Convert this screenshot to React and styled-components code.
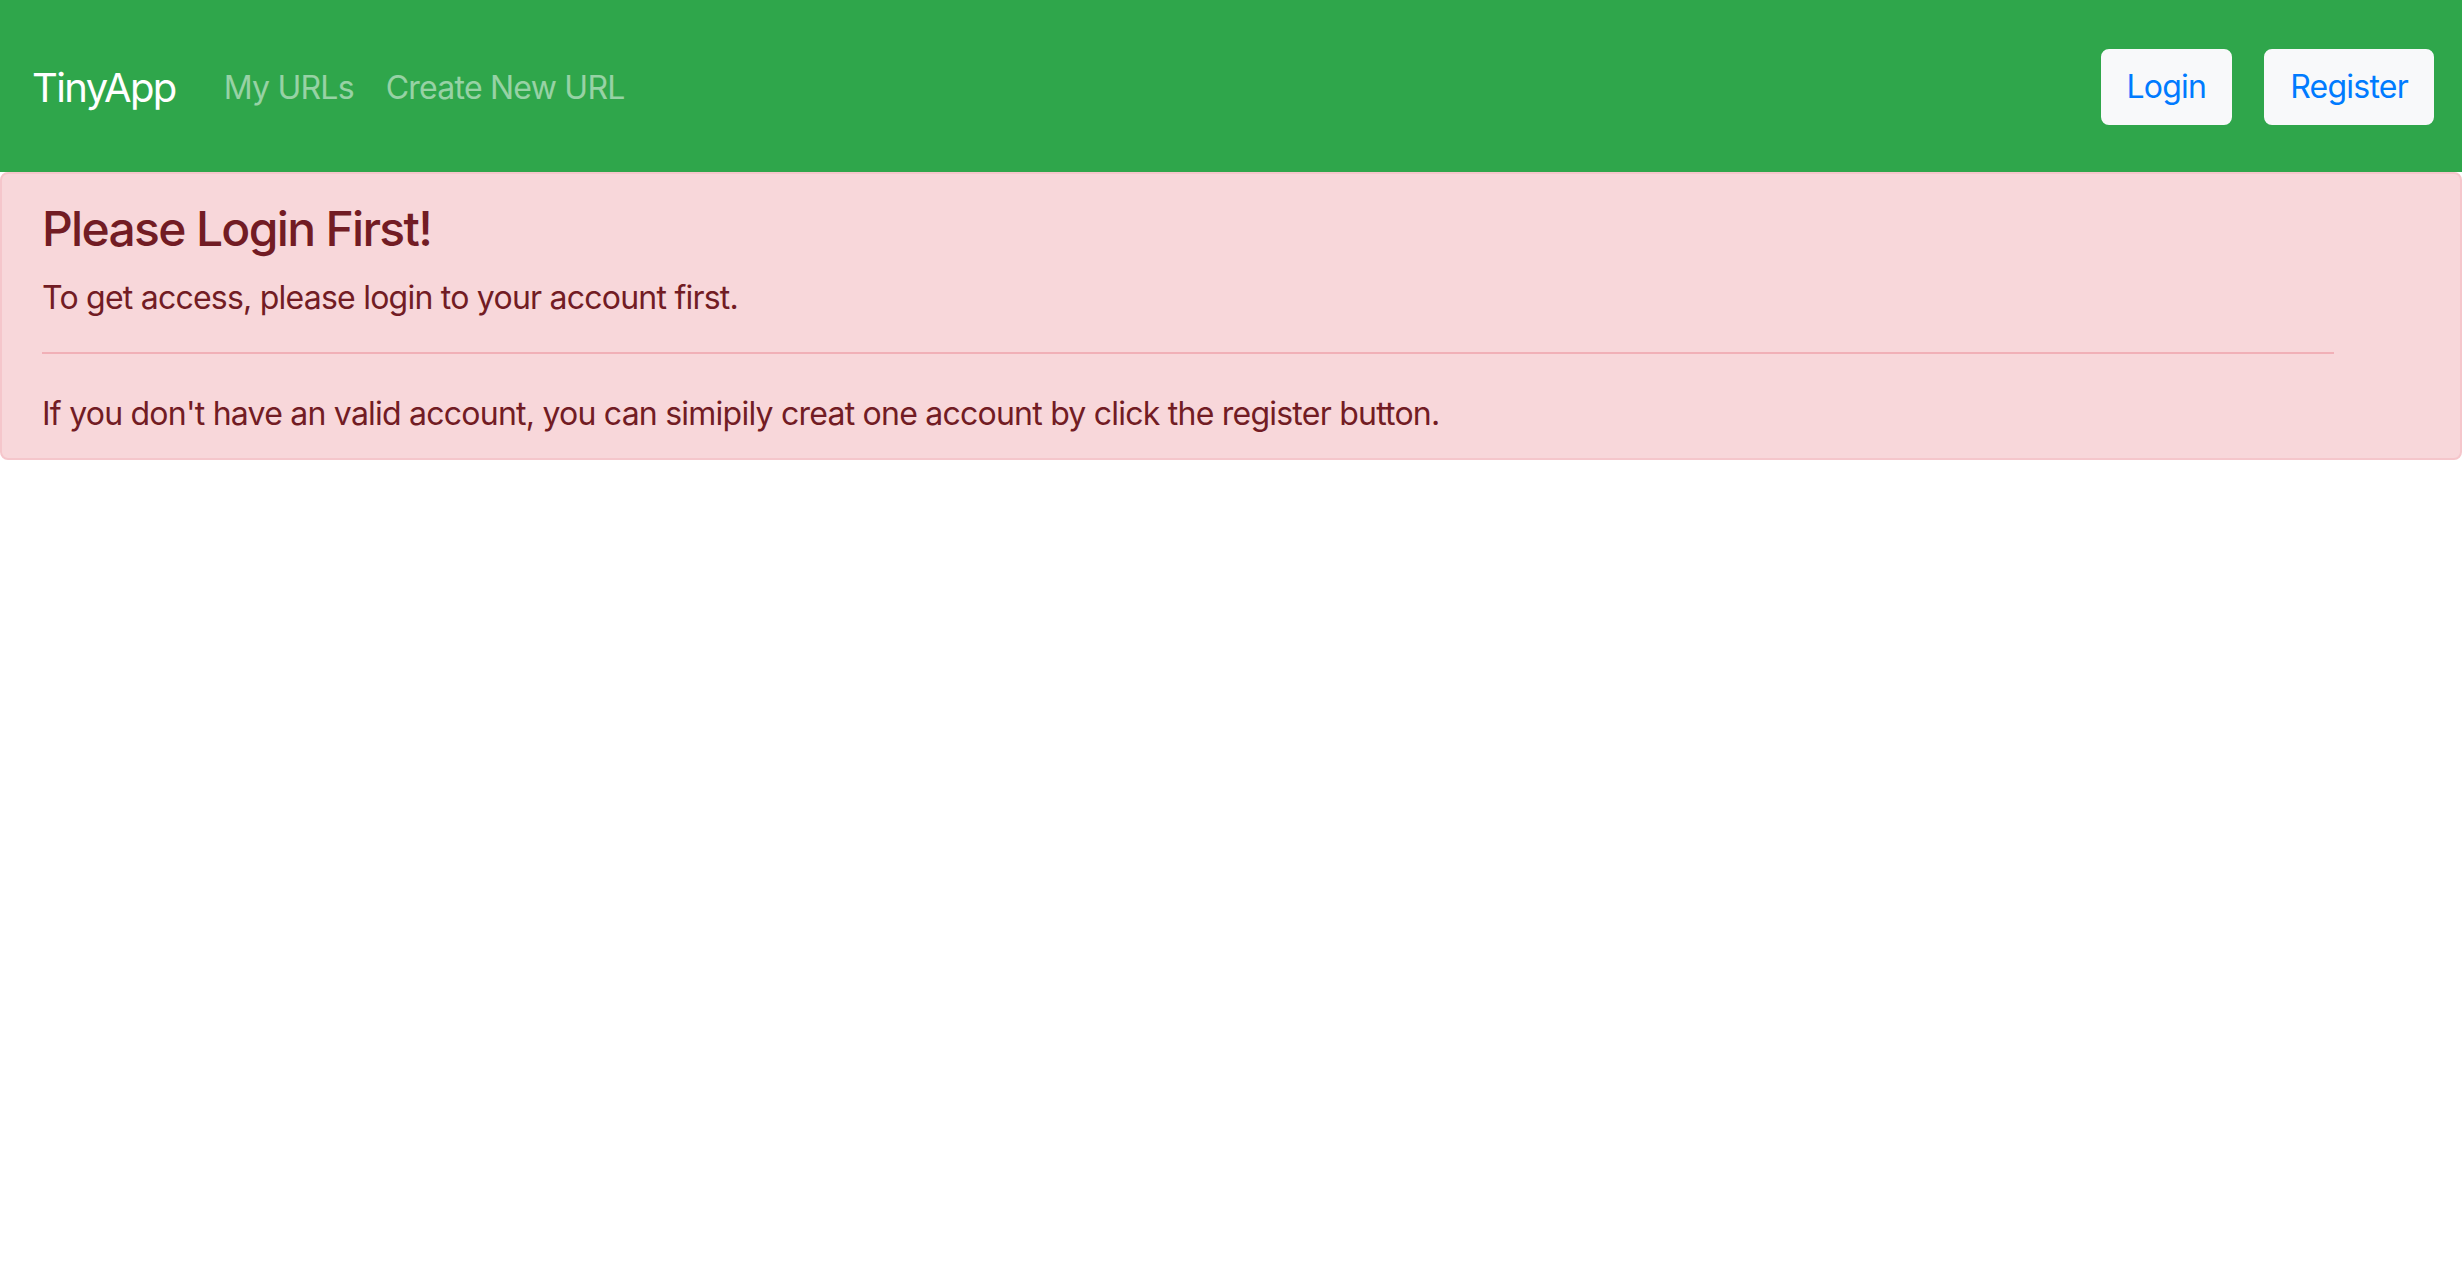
import React from 'react';
import styled, { createGlobalStyle } from 'styled-components';

const GlobalStyle = createGlobalStyle`
  html, body {
    margin: 0;
    padding: 0;
    background: #fff;
  }
  body {
    font-family: Inter, "Noto Sans", "Liberation Sans", sans-serif;
    font-size: 32px;
    line-height: 1.5;
    letter-spacing: -0.024em;
    color: #212529;
  }
`;

const Navbar = styled.nav`
  display: flex;
  align-items: center;
  height: 172px;
  box-sizing: border-box;
  padding: 18px 28px 14px 32px;
  background-color: #2fa64b;
`;

const Brand = styled.a`
  margin-right: 32px;
  font-size: 40px;
  line-height: 1.5;
  letter-spacing: -0.04em;
  color: #fff;
  text-decoration: none;
`;

const NavList = styled.ul`
  display: flex;
  flex: 1;
  margin: 0;
  padding: 0;
  list-style: none;
`;

const NavLink = styled.a`
  display: block;
  padding: 0 16px;
  color: rgba(255, 255, 255, 0.5);
  text-decoration: none;
`;

const Actions = styled.div`
  display: flex;
  gap: 32px;
  margin-top: -3px;
`;

const Button = styled.button`
  height: 76px;
  padding: 12px 24px;
  font-family: inherit;
  font-size: 32px;
  line-height: 1.5;
  letter-spacing: inherit;
  color: #007bff;
  background-color: #f8f9fa;
  border: 2px solid #f8f9fa;
  border-radius: 8px;
  cursor: pointer;
`;

const Alert = styled.div`
  padding: 26px 40px 20px;
  border: 2px solid #f5c6cb;
  border-radius: 8px;
  background-color: #f8d7da;
  color: #721c24;
`;

const Heading = styled.h4`
  margin: 0 0 16px;
  font-size: 48px;
  font-weight: 500;
  line-height: 1.2;
  letter-spacing: -0.035em;
  color: inherit;
`;

const Para = styled.p`
  margin: 0 0 ${props => (props.last ? 0 : 30)}px;
`;

const Rule = styled.hr`
  margin: 30px 86px 36px 0;
  border: 0;
  border-top: 2px solid #f1b0b7;
`;

export default function App() {
  return (
    <>
      <GlobalStyle />
      <Navbar>
        <Brand href="#">TinyApp</Brand>
        <NavList>
          <li>
            <NavLink href="#">My URLs</NavLink>
          </li>
          <li>
            <NavLink href="#">Create New URL</NavLink>
          </li>
        </NavList>
        <Actions>
          <Button>Login</Button>
          <Button>Register</Button>
        </Actions>
      </Navbar>
      <Alert>
        <Heading>Please Login First!</Heading>
        <Para>To get access, please login to your account first.</Para>
        <Rule />
        <Para last>
          If you don't have an valid account, you can simipily creat one account by click the register button.
        </Para>
      </Alert>
    </>
  );
}
